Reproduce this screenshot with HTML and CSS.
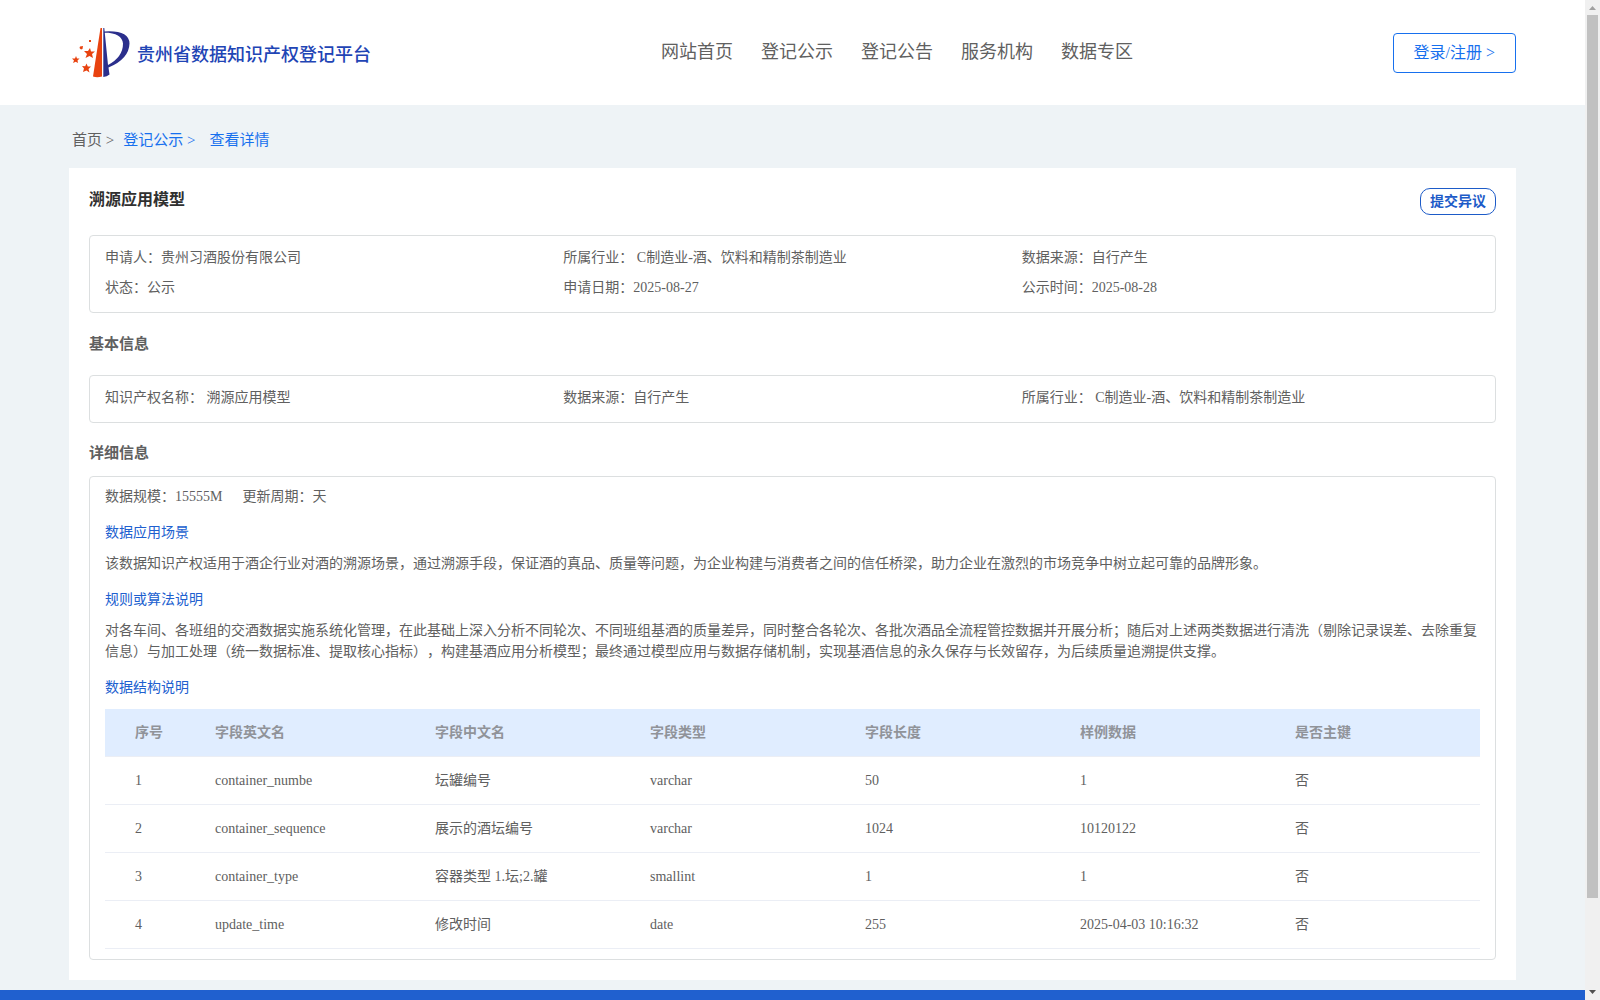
FILE: index.html
```html
<!DOCTYPE html>
<html lang="zh-CN">
<head>
<meta charset="utf-8">
<meta name="viewport" content="width=device-width, initial-scale=1">
<title>贵州省数据知识产权登记平台</title>
<link rel="stylesheet" href="styles.css">
</head>
<body>
<div class="viewport">
  <div class="page">
    <header class="header">
      <a class="brand" href="#">
        <svg class="logo" viewBox="0 0 58 50" aria-hidden="true">
          <path fill="#e8420f" d="M27.500 0H29V48.500Q24 50 20 48.500Z"/>
          <path fill="#2b2f8c" d="M30.300 0H31.300L35 37Q50 29 50 15.500Q49 5 31.500 4.500V3.500Q56 2 56.500 15.500Q56 31 35.500 39.500L36.500 46.500Q34 48.500 30.300 49Z"/>
          <path fill="#e8420f" d="M17 20L18 23.500L22 23.500L19 26L20 30L16.500 28L12.500 30L14 26L11 23L15 23Z"/>
          <path fill="#e8420f" d="M13.500 35.500L14.800 38.500L18 38.500L15.500 41L16.500 44.500L13.500 42.500L10 44L11 40.500L9 38L12.200 38.300Z"/>
          <path fill="#e8420f" d="M3 28L4 30.500L6.500 30.500L4.500 32.500L5 35L2.700 33.800L0 35L1 32.500L-1 30.500L2 30.500Z"/>
          <path fill="#e8420f" d="M7 18.500L10 18L9.500 21L8 21.500L6.500 20ZM16 12L18 12L18 14L16 14Z"/>
        </svg>
        <span class="brand-name">贵州省数据知识产权登记平台</span>
      </a>
      <nav class="nav">
        <a href="#">网站首页</a>
        <a href="#">登记公示</a>
        <a href="#">登记公告</a>
        <a href="#">服务机构</a>
        <a href="#">数据专区</a>
      </nav>
      <button class="login" type="button">登录/注册 &gt;</button>
    </header>

    <main class="main">
      <nav class="crumbs" aria-label="面包屑">
        <a class="crumb-home" href="#">首页 &gt;</a>
        <a href="#">登记公示 &gt;</a>
        <a class="crumb-last" href="#">查看详情</a>
      </nav>

      <article class="panel">
        <div class="panel-head">
          <h1>溯源应用模型</h1>
          <button class="objection" type="button">提交异议</button>
        </div>

        <div class="box facts">
          <div>申请人：贵州习酒股份有限公司</div>
          <div>所属行业： C制造业-酒、饮料和精制茶制造业</div>
          <div>数据来源：自行产生</div>
          <div>状态：公示</div>
          <div>申请日期：2025-08-27</div>
          <div>公示时间：2025-08-28</div>
        </div>

        <h2 class="section-basic">基本信息</h2>
        <div class="box facts">
          <div>知识产权名称： 溯源应用模型</div>
          <div>数据来源：自行产生</div>
          <div>所属行业： C制造业-酒、饮料和精制茶制造业</div>
        </div>

        <h2 class="section-detail">详细信息</h2>
        <section class="box detail">
          <div class="scale"><span>数据规模：15555M</span><span>更新周期：天</span></div>
          <h3>数据应用场景</h3>
          <p>该数据知识产权适用于酒企行业对酒的溯源场景，通过溯源手段，保证酒的真品、质量等问题，为企业构建与消费者之间的信任桥梁，助力企业在激烈的市场竞争中树立起可靠的品牌形象。</p>
          <h3>规则或算法说明</h3>
          <p>对各车间、各班组的交酒数据实施系统化管理，在此基础上深入分析不同轮次、不同班组基酒的质量差异，同时整合各轮次、各批次酒品全流程管控数据并开展分析；随后对上述两类数据进行清洗（剔除记录误差、去除重复信息）与加工处理（统一数据标准、提取核心指标），构建基酒应用分析模型；最终通过模型应用与数据存储机制，实现基酒信息的永久保存与长效留存，为后续质量追溯提供支撑。</p>
          <h3>数据结构说明</h3>
          <table>
            <colgroup>
              <col class="col-index"><col class="col-name"><col class="col-mid"><col class="col-mid"><col class="col-mid"><col class="col-mid"><col class="col-key">
            </colgroup>
            <thead>
              <tr><th>序号</th><th>字段英文名</th><th>字段中文名</th><th>字段类型</th><th>字段长度</th><th>样例数据</th><th>是否主键</th></tr>
            </thead>
            <tbody>
              <tr><td>1</td><td>container_numbe</td><td>坛罐编号</td><td>varchar</td><td>50</td><td>1</td><td>否</td></tr>
              <tr><td>2</td><td>container_sequence</td><td>展示的酒坛编号</td><td>varchar</td><td>1024</td><td>10120122</td><td>否</td></tr>
              <tr><td>3</td><td>container_type</td><td>容器类型 1.坛;2.罐</td><td>smallint</td><td>1</td><td>1</td><td>否</td></tr>
              <tr><td>4</td><td>update_time</td><td>修改时间</td><td>date</td><td>255</td><td>2025-04-03 10:16:32</td><td>否</td></tr>
            </tbody>
          </table>
        </section>
      </article>
    </main>
    <footer class="footer"></footer>
  </div>

  <div class="scrollbar" aria-hidden="true">
    <svg class="arrow" viewBox="0 0 15 15"><path fill="#a0a0a0" d="M4 10H11L7.500 6Z"/></svg>
    <div class="track"><div class="thumb"></div></div>
    <svg class="arrow" viewBox="0 0 15 15"><path fill="#505050" d="M4 5H11L7.500 9Z"/></svg>
  </div>
</div>
</body>
</html>
```
FILE: styles.css
```css
* {
  box-sizing: border-box;
}

body {
  margin: 0;
  font-family: "Liberation Serif", "Noto Sans CJK SC", serif;
  font-size: 14px;
  line-height: 21px;
  color: #606060;
  text-spacing-trim: space-all;
}

h1, h2, h3, p {
  margin: 0;
}

a {
  color: inherit;
  text-decoration: none;
}

button {
  font: inherit;
  background: #fff;
  cursor: pointer;
}

.viewport {
  display: flex;
  height: 100vh;
}

.page {
  flex: 1;
  min-width: 0;
  overflow: hidden;
  background: #eef3f6;
}

/* Header */

.header {
  display: grid;
  grid-template-columns: 592px 1fr auto;
  align-items: center;
  height: 105px;
  padding: 0 69px;
  background: #fff;
}

.brand {
  display: flex;
  align-items: center;
  gap: 6px;
  padding-left: 4px;
  font-size: 18px;
  font-weight: 500;
  color: #1f45b5;
}

.brand-name {
  padding-top: 5px;
}

.logo {
  width: 58px;
  height: 50px;
  overflow: visible;
}

.nav {
  display: flex;
  gap: 28px;
  font-size: 18px;
}

.login {
  height: 40px;
  padding: 0 20px;
  border: 1px solid #1770ee;
  border-radius: 4px;
  font-size: 16px;
  color: #1770ee;
}

/* Content */

.main {
  padding: 0 69px 10px;
}

.crumbs {
  display: flex;
  gap: 9px;
  padding: 7px 3px 0;
  font-size: 15px;
  line-height: 56px;
  color: #1770ee;
}

.crumb-home {
  color: #606060;
}

.crumb-last {
  margin-left: 5px;
}

.panel {
  padding: 20px;
  background: #fff;
}

.panel-head {
  display: flex;
  justify-content: space-between;
  align-items: flex-start;
  height: 47px;
}

h1 {
  font-size: 16px;
  line-height: 24px;
  color: #303030;
}

.objection {
  height: 27px;
  padding: 0 9px;
  border: 1px solid #1d5bc8;
  border-radius: 10px;
  font-weight: bold;
  color: #1d5bc8;
}

.box {
  border: 1px solid #dcdfe0;
  border-radius: 4px;
}

.facts {
  display: grid;
  grid-template-columns: repeat(3, 1fr);
  padding: 7px 15px 9px;
  line-height: 30px;
}

h2 {
  font-size: 15px;
}

.section-basic {
  line-height: 62px;
}

.section-detail {
  padding-top: 7px;
  line-height: 46px;
}

.detail {
  padding: 9px 15px 10px;
}

.scale {
  display: flex;
  gap: 20px;
}

h3 {
  margin: 15px 0 10px;
  font-size: 14px;
  font-weight: normal;
  color: #2060cf;
}

table {
  width: 100%;
  margin-top: 11px;
  table-layout: fixed;
  border-collapse: separate;
  border-spacing: 0;
}

.col-index {
  width: 100px;
}

.col-name {
  width: 220px;
}

.col-mid {
  width: 215px;
}

.col-key {
  width: 195px;
}

th, td {
  height: 48px;
  padding: 0 10px;
  border-bottom: 1px solid #ebeef5;
  text-align: left;
}

th:first-child, td:first-child {
  padding-left: 30px;
}

th {
  background: #e0edff;
  color: #909399;
}

.footer {
  height: 160px;
  background: #2060cf;
}

/* Scrollbar */

.scrollbar {
  display: flex;
  flex-direction: column;
  width: 15px;
  background: #f0f0f0;
}

.arrow {
  width: 15px;
  height: 15px;
}

.track {
  flex: 1;
  padding-left: 2px;
}

.thumb {
  width: 11px;
  height: 91%;
  background: #c1c1c1;
}
```
